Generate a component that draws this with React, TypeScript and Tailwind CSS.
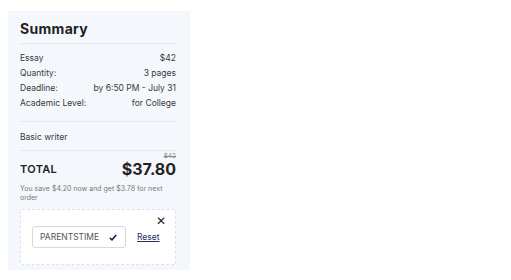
import React from "react";

export default function App() {
  const rows = [
    ["Essay", "$42"],
    ["Quantity:", "3 pages"],
    ["Deadline:", "by 6:50 PM - July 31"],
    ["Academic Level:", "for College"],
  ];
  return (
    <div className="w-[511px] h-[280px] bg-white pt-[11px] pl-[8px]" style={{ fontFamily: "Inter, 'Open Sans', sans-serif" }}>
      <div className="w-[182px] h-[259px] bg-[#f4f7fb] pl-[12px] pr-[14px] pt-[8px]">
        <div className="text-[14px] font-bold text-[#222] leading-[20px] tracking-[0.3px]">Summary</div>
        <div className="mt-[4px] border-t border-[#e3e8ee]" />
        <div className="mt-[7px] flex flex-col">
          {rows.map(([l, r]) => (
            <div key={l} className="flex justify-between text-[8.5px] text-[#3a3a3a] leading-[15px]">
              <span>{l}</span>
              <span>{r}</span>
            </div>
          ))}
        </div>
        <div className="mt-[10px] border-t border-[#e3e8ee]" />
        <div className="mt-[9px] text-[8.5px] text-[#3a3a3a] leading-[12px]">Basic writer</div>
        <div className="mt-[7px] border-t border-[#e3e8ee]" />
        <div className="flex flex-col items-end mt-[1px]">
          <span className="text-[6.5px] text-[#888] line-through leading-[8px]">$42</span>
        </div>
        <div className="flex justify-between items-center -mt-[1px]">
          <span className="text-[11px] font-semibold text-[#222] tracking-[0.3px]">TOTAL</span>
          <span className="text-[16px] font-bold text-[#222] leading-[20px]">$37.80</span>
        </div>
        <div className="mt-[5px] text-[7px] text-[#777] leading-[9px]">
          You save $4.20 now and get $3.78 for next order
        </div>
        <div className="mt-[7px] h-[56px] bg-white border border-dashed border-[#dde2e8] rounded-[2px] relative">
          <span className="absolute right-[9px] top-[5px] text-[12px] leading-[12px] text-[#222]">✕</span>
          <div className="flex items-center mt-[16px] ml-[11px] gap-[11px]">
            <div className="w-[94px] h-[22px] border border-[#d5d8dd] rounded-[3px] flex items-center justify-between pl-[7px] pr-[8px]">
              <span className="text-[8.5px] text-[#555]">PARENTSTIME</span>
              <svg width="8" height="7" viewBox="0 0 8 7">
                <path d="M0.8 3.8 L3 5.8 L7.2 1" stroke="#1d2150" strokeWidth="1.6" fill="none" />
              </svg>
            </div>
            <span className="text-[8.5px] text-[#2b2e5c] underline">Reset</span>
          </div>
        </div>
      </div>
    </div>
  );
}
